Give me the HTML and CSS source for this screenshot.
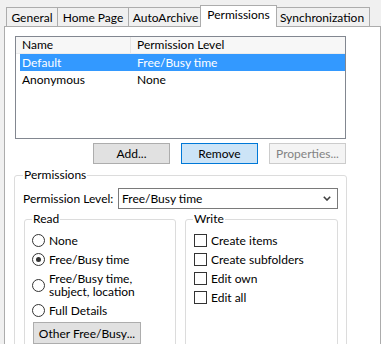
FILE: index.html
```html
<!DOCTYPE html>
<html lang="en">
<head>
    <meta charset="UTF-8">
    <title>Properties - Permissions</title>
    <link rel="stylesheet" href="styles.css">
</head>
<body>
    <div class="tabs">
        <div class="tab tab-general">General</div>
        <div class="tab tab-home">Home Page</div>
        <div class="tab tab-archive">AutoArchive</div>
        <div class="tab tab-perm active">Permissions</div>
        <div class="tab tab-sync">Synchronization</div>
    </div>

    <div class="panel">
        <div class="listview">
            <div class="lv-header">
                <div class="col col-name">Name</div>
                <div class="col col-level">Permission Level</div>
            </div>
            <div class="lv-row selected">
                <div class="cell cell-name">Default</div>
                <div class="cell">Free/Busy time</div>
            </div>
            <div class="lv-row">
                <div class="cell cell-name">Anonymous</div>
                <div class="cell">None</div>
            </div>
        </div>

        <div class="list-buttons">
            <button class="btn btn-add">Add...</button>
            <button class="btn btn-focus">Remove</button>
            <button class="btn btn-disabled" disabled>Properties...</button>
        </div>

        <fieldset class="group group-perm">
            <legend>Permissions</legend>
            <div class="level-row">
                <span class="level-label">Permission Level:</span>
                <div class="select">
                    <span>Free/Busy time</span>
                    <svg class="chevron" width="8" height="5" viewBox="0 0 8 5">
                        <path d="M0.8 0.8 L4 4 L7.2 0.8" fill="none" stroke="#404040" stroke-width="1.6"/>
                    </svg>
                </div>
            </div>

            <div class="subgroups">
                <fieldset class="group group-read">
                    <legend>Read</legend>
                    <label class="option"><input type="radio" name="read"> None</label>
                    <label class="option"><input type="radio" name="read" checked> Free/Busy time</label>
                    <label class="option option-tall"><input type="radio" name="read"> <span>Free/Busy time,<br>subject, location</span></label>
                    <label class="option"><input type="radio" name="read"> Full Details</label>
                    <button class="btn btn-other">Other Free/Busy...</button>
                </fieldset>

                <fieldset class="group group-write">
                    <legend>Write</legend>
                    <label class="option"><input type="checkbox"> Create items</label>
                    <label class="option"><input type="checkbox"> Create subfolders</label>
                    <label class="option"><input type="checkbox"> Edit own</label>
                    <label class="option"><input type="checkbox"> Edit all</label>
                </fieldset>
            </div>
        </fieldset>
    </div>
</body>
</html>
```

FILE: styles.css
```css
* {
    margin: 0;
    padding: 0;
    box-sizing: border-box;
}

body {
    font-family: 'Segoe UI', Lato, 'Noto Sans', sans-serif;
    font-size: 12px;
    color: #000000;
    background: #f0f0f0;
    width: 381px;
    height: 344px;
    overflow: hidden;
}

/* tab strip */
.tabs {
    display: flex;
    align-items: flex-end;
    height: 26px;
    padding-left: 6px;
}

.tab {
    height: 19px;
    line-height: 19px;
    text-align: center;
    border: 1px solid #acacac;
    border-bottom: none;
    background: #f0f0f0;
    margin-left: -1px;
    white-space: nowrap;
}

.tab-general { width: 52px; margin-left: 0; }
.tab-home { width: 72px; }
.tab-archive { width: 75px; }
.tab-perm { width: 77px; }
.tab-sync { width: 96px; }

.tab.active {
    position: relative;
    z-index: 1;
    height: 22px;
    line-height: 18px;
    margin: 0 -2px -1px -3px;
    background: #ffffff;
}

.panel {
    margin-left: 4px;
    width: 377px;
    height: 330px;
    border: 1px solid #acacac;
    background: #ffffff;
    padding: 9px 0 0 9px;
}

/* list of users */
.listview {
    width: 331px;
    height: 103px;
    margin-left: 1px;
    border: 1px solid #828790;
    background: #ffffff;
}

.lv-header {
    display: flex;
    height: 17px;
    line-height: 16px;
    background: #f7f7f7;
    border-bottom: 1px solid #ececec;
}

.col {
    padding-left: 6px;
}

.col-name {
    width: 115px;
    border-right: 1px solid #e5e5e5;
}

.lv-row {
    display: flex;
    height: 17px;
    line-height: 17px;
    margin: 0 0 0 4px;
}

.lv-row.selected {
    background: #3399ff;
    color: #ffffff;
}

.cell {
    padding-left: 2px;
}

.cell-name {
    width: 115px;
}

/* buttons */
.btn {
    font-family: inherit;
    font-size: 12px;
    height: 21px;
    background: #e1e1e1;
    border: 1px solid #adadad;
    color: #000000;
}

.list-buttons {
    display: flex;
    justify-content: flex-end;
    gap: 11px;
    width: 332px;
    margin-top: 4px;
}

.list-buttons .btn {
    width: 77px;
}

.btn-focus {
    background: #cce4f7;
    border-color: #0078d7;
}

.btn-disabled {
    background: #f4f4f4;
    border-color: #cccccc;
    color: #838383;
}

/* group boxes */
.group {
    border: 1px solid #dcdcdc;
    border-radius: 3px;
}

.group legend {
    line-height: 16px;
    padding: 0 1px;
}

.group-perm {
    width: 332px;
    height: 200px;
    margin-top: 3px;
    padding: 5px 8px 0 8px;
}

.level-row {
    display: flex;
    align-items: center;
    justify-content: space-between;
    width: 315px;
    white-space: nowrap;
}

.select {
    display: flex;
    align-items: center;
    justify-content: space-between;
    width: 220px;
    height: 21px;
    border: 1px solid #7a7a7a;
    padding: 0 6px 0 3px;
}

.subgroups {
    display: flex;
    gap: 9px;
    margin-top: 2px;
    margin-left: 1px;
}

.group-read,
.group-write {
    height: 160px;
    padding: 4px 7px 0 7px;
}

.group-read {
    width: 152px;
}

.group-write {
    width: 153px;
}

.option {
    display: flex;
    align-items: center;
    gap: 3px;
    height: 19px;
    white-space: nowrap;
}

.option-tall {
    height: 32px;
    line-height: 13px;
}

.option input {
    appearance: none;
    width: 13px;
    height: 13px;
    border: 1px solid #333333;
    background: #ffffff;
    flex-shrink: 0;
    margin-right: 1px;
}

.option input[type="radio"] {
    border-radius: 50%;
    position: relative;
}

.option input[type="radio"]:checked::after {
    content: '';
    position: absolute;
    left: 3px;
    top: 3px;
    width: 5px;
    height: 5px;
    border-radius: 50%;
    background: #333333;
}

.group-write .option input {
    margin-left: 1px;
}

.btn-other {
    width: 108px;
    height: 22px;
    margin-top: 2px;
    margin-left: 1px;
}
```
